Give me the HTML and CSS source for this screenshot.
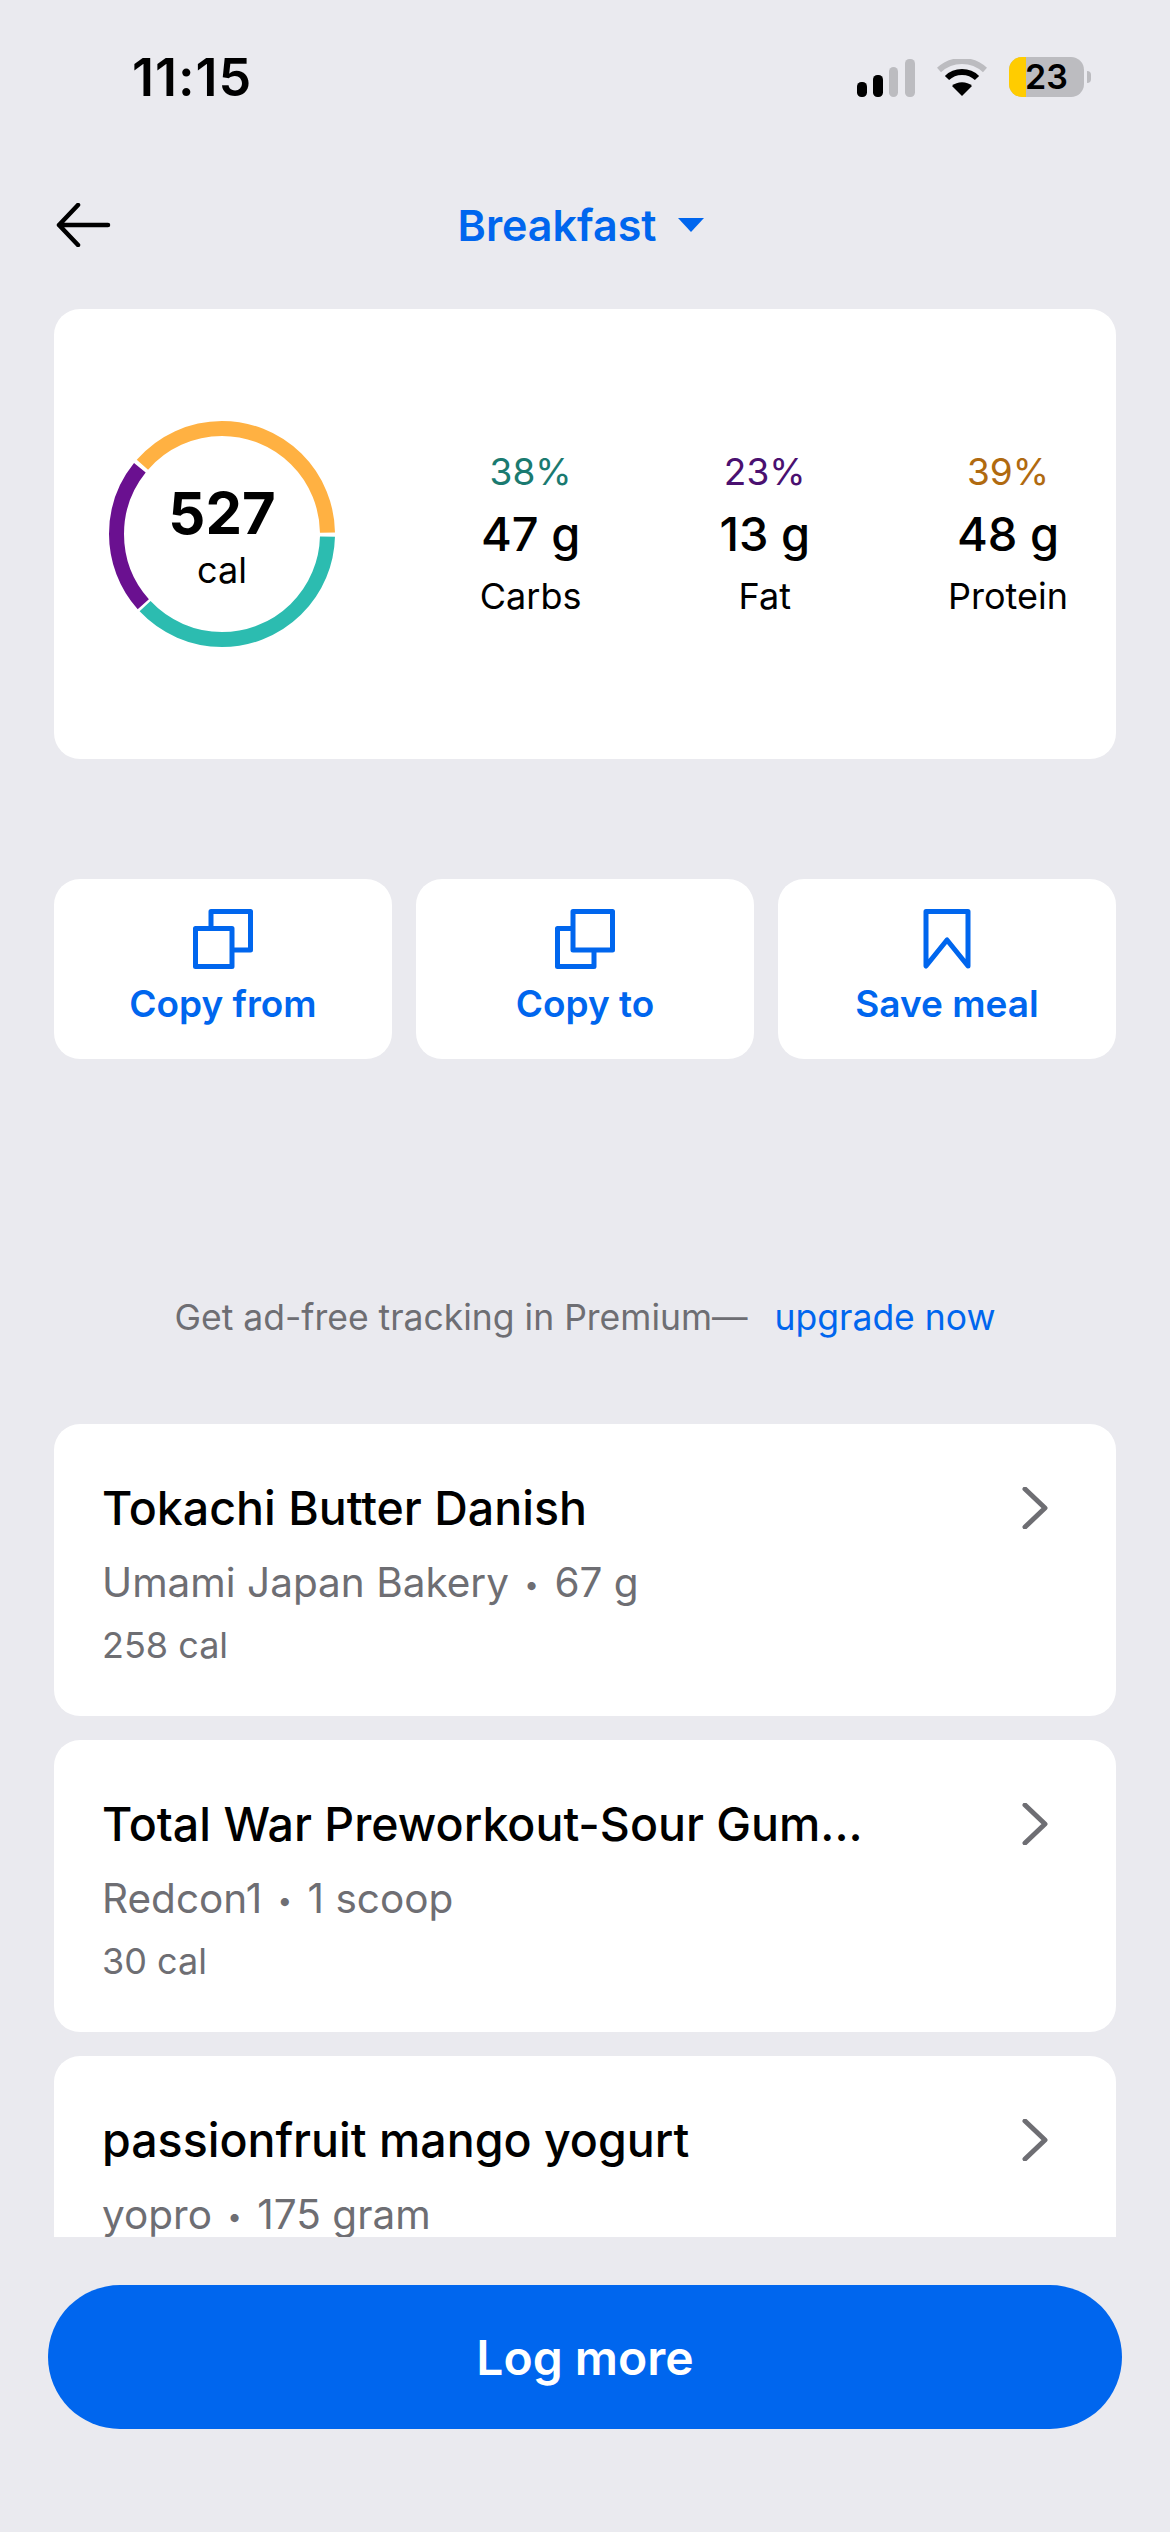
FILE: index.html
```html
<!DOCTYPE html>
<html lang="en">
<head>
    <meta charset="UTF-8">
    <meta name="viewport" content="width=device-width, initial-scale=1.0">
    <title>Breakfast</title>
    <link rel="stylesheet" href="styles.css">
</head>
<body>
    <div class="status-bar">
        <span class="time">11:15</span>
        <div class="status-icons">
            <svg class="signal" width="58" height="38" viewBox="0 0 58 38">
                <rect x="0" y="23" width="10" height="15" rx="4.5" fill="#000"/>
                <rect x="16" y="16" width="10" height="22" rx="4.5" fill="#000"/>
                <rect x="32" y="8" width="9" height="30" rx="4.5" fill="#bcbcc0"/>
                <rect x="48" y="0" width="10" height="38" rx="4.5" fill="#bcbcc0"/>
            </svg>
            <svg class="wifi" width="50" height="38" viewBox="0 0 50 38">
                <path d="M2 11 C15 -1 35 -1 48 11" fill="none" stroke="#bcbcc0" stroke-width="6"/>
                <path d="M10 19 C18 11 32 11 40 19" fill="none" stroke="#000" stroke-width="6"/>
                <path d="M25 37 L15 27 C20 22 30 22 35 27 Z" fill="#000"/>
            </svg>
            <div class="battery">
                <div class="battery-body">
                    <span class="battery-fill"></span>
                    <span class="battery-num">23</span>
                </div>
                <span class="battery-tip"></span>
            </div>
        </div>
    </div>

    <header class="nav">
        <svg class="back" width="58" height="44" viewBox="0 0 58 44">
            <path d="M52 22 H3 M22 2 L3 22 L22 42" fill="none" stroke="#000" stroke-width="4.5" stroke-linecap="round" stroke-linejoin="round"/>
        </svg>
        <div class="nav-title">
            <span>Breakfast</span>
            <span class="caret"></span>
        </div>
    </header>

    <section class="card summary">
        <div class="ring">
            <svg width="226" height="226" viewBox="0 0 226 226">
                <circle class="seg seg-carbs" cx="113" cy="113" r="105.5" pathLength="100"/>
                <circle class="seg seg-fat" cx="113" cy="113" r="105.5" pathLength="100"/>
                <circle class="seg seg-protein" cx="113" cy="113" r="105.5" pathLength="100"/>
            </svg>
            <div class="ring-label">
                <div class="ring-num">527</div>
                <div class="ring-unit">cal</div>
            </div>
        </div>
        <div class="macros">
            <div class="macro">
                <div class="pct pct-carbs">38%</div>
                <div class="grams">47 g</div>
                <div class="macro-name">Carbs</div>
            </div>
            <div class="macro">
                <div class="pct pct-fat">23%</div>
                <div class="grams">13 g</div>
                <div class="macro-name">Fat</div>
            </div>
            <div class="macro">
                <div class="pct pct-protein">39%</div>
                <div class="grams">48 g</div>
                <div class="macro-name">Protein</div>
            </div>
        </div>
    </section>

    <section class="actions">
        <button class="card action">
            <svg width="60" height="60" viewBox="0 0 60 60">
                <path class="ico" d="M18 2.5 H57.5 V41 H18 Z"/>
                <path class="ico ico-front" d="M2.5 19.5 H39 V57.5 H2.5 Z"/>
            </svg>
            <span>Copy from</span>
        </button>
        <button class="card action">
            <svg width="60" height="60" viewBox="0 0 60 60">
                <path class="ico" d="M2.5 19.5 H39 V57.5 H2.5 Z"/>
                <path class="ico ico-front" d="M18 2.5 H57.5 V41 H18 Z"/>
            </svg>
            <span>Copy to</span>
        </button>
        <button class="card action">
            <svg width="48" height="60" viewBox="0 0 48 60">
                <path class="ico" d="M3 2.5 H45 V57 L24 31 L3 57 Z"/>
            </svg>
            <span>Save meal</span>
        </button>
    </section>

    <p class="promo">
        <span>Get ad-free tracking in Premium—</span>
        <a class="promo-link" href="#">upgrade now</a>
    </p>

    <div class="food-list">
        <div class="card food">
            <div>
                <div class="food-name">Tokachi Butter Danish</div>
                <div class="food-meta">Umami Japan Bakery <span class="dot">•</span> 67 g</div>
                <div class="food-cal">258 cal</div>
            </div>
            <svg class="chevron" width="26" height="42" viewBox="0 0 26 42"><path d="M3 2 L23 21 L3 40"/></svg>
        </div>
        <div class="card food">
            <div>
                <div class="food-name">Total War Preworkout-Sour Gum...</div>
                <div class="food-meta">Redcon1 <span class="dot">•</span> 1 scoop</div>
                <div class="food-cal">30 cal</div>
            </div>
            <svg class="chevron" width="26" height="42" viewBox="0 0 26 42"><path d="M3 2 L23 21 L3 40"/></svg>
        </div>
        <div class="card food">
            <div>
                <div class="food-name">passionfruit mango yogurt</div>
                <div class="food-meta">yopro <span class="dot">•</span> 175 gram</div>
            </div>
            <svg class="chevron" width="26" height="42" viewBox="0 0 26 42"><path d="M3 2 L23 21 L3 40"/></svg>
        </div>
    </div>

    <footer class="footer">
        <button class="log-more">Log more</button>
    </footer>
</body>
</html>
```

FILE: styles.css
```css
* {
    box-sizing: border-box;
}
html, body {
    margin: 0;
    height: 2532px;
    overflow: hidden;
}
body {
    font-family: Inter, "Liberation Sans", sans-serif;
    background-color: #eaeaef;
    color: #000;
}
.card {
    background: white;
    border-radius: 26px;
}

/* status bar */
.status-bar {
    height: 154px;
    padding: 53px 79px 0 132px;
    display: flex;
    justify-content: space-between;
}
.time {
    font-size: 52px;
    font-weight: 600;
    line-height: 50px;
    letter-spacing: 1px;
}
.status-icons {
    display: flex;
    align-items: flex-start;
    gap: 22px;
    padding-top: 4px;
}
.signal, .wifi {
    margin-top: 2px;
}
.battery {
    display: flex;
    align-items: center;
    gap: 3px;
}
.battery-body {
    position: relative;
    width: 75px;
    height: 40px;
    border-radius: 13px;
    background: #bcbcc0;
    text-align: center;
}
.battery-fill {
    position: absolute;
    left: 0;
    top: 0;
    bottom: 0;
    width: 17px;
    border-radius: 13px 0 0 13px;
    background: #ffcc00;
}
.battery-num {
    position: relative;
    display: block;
    font-size: 34px;
    font-weight: 600;
    line-height: 40px;
}
.battery-tip {
    width: 4px;
    height: 12px;
    border-radius: 0 5px 5px 0;
    background: #bcbcc0;
}

/* nav */
.nav {
    position: relative;
    height: 155px;
    display: flex;
    align-items: flex-start;
    justify-content: center;
}
.back {
    position: absolute;
    left: 56px;
    top: 49px;
}
.nav-title {
    display: flex;
    align-items: center;
    gap: 22px;
    font-size: 43px;
    font-weight: 600;
    line-height: 72px;
    color: #0066ee;
    margin-top: 35px;
    margin-left: -8px;
}
.caret {
    width: 0;
    height: 0;
    border-left: 13px solid transparent;
    border-right: 13px solid transparent;
    border-top: 14px solid #0066ee;
}

/* summary */
.summary {
    height: 450px;
    margin: 0 54px;
    padding: 0 48px 0 55px;
    display: flex;
    align-items: center;
}
.ring {
    position: relative;
    width: 226px;
    height: 226px;
    flex: none;
}
.seg {
    fill: none;
    stroke-width: 15;
}
.seg-carbs {
    stroke: #2cbcb0;
    stroke-dasharray: 37.6 62.4;
    stroke-dashoffset: -0.4;
}
.seg-fat {
    stroke: #6a1090;
    stroke-dasharray: 22.4 77.6;
    stroke-dashoffset: -38.4;
}
.seg-protein {
    stroke: #ffb142;
    stroke-dasharray: 38.4 61.6;
    stroke-dashoffset: -61.4;
}
.ring-label {
    position: absolute;
    inset: 0;
    text-align: center;
}
.ring-num {
    font-size: 58px;
    font-weight: 700;
    line-height: 60px;
    margin-top: 62px;
}
.ring-unit {
    font-size: 36px;
    line-height: 40px;
    margin-top: 7px;
}
.macros {
    flex: 1;
    display: flex;
    justify-content: flex-end;
    gap: 138px;
}
.macro {
    text-align: center;
}
.pct {
    font-size: 37px;
    line-height: 40px;
}
.pct-carbs { color: #1a7a70; }
.pct-fat { color: #4a1070; }
.pct-protein { color: #b06a10; }
.grams {
    font-size: 47px;
    font-weight: 500;
    line-height: 56px;
    margin-top: 14px;
    white-space: nowrap;
}
.macro-name {
    font-size: 36px;
    line-height: 40px;
    margin-top: 14px;
    white-space: nowrap;
}

/* actions */
.actions {
    display: flex;
    gap: 24px;
    margin: 120px 54px 0;
}
.action {
    flex: 1;
    height: 180px;
    border: none;
    padding: 30px 0 0;
    display: flex;
    flex-direction: column;
    align-items: center;
    gap: 12px;
    font-family: inherit;
    font-size: 37px;
    font-weight: 600;
    color: #0066ee;
}
.ico {
    fill: none;
    stroke: #0066ee;
    stroke-width: 5;
    stroke-linejoin: round;
}
.ico-front {
    fill: white;
}

/* promo */
.promo {
    margin: 0;
    padding-top: 239px;
    display: flex;
    justify-content: center;
    gap: 27px;
    font-size: 35.5px;
    line-height: 40px;
    color: #6e6e73;
}
.promo-link {
    color: #0066ee;
    text-decoration: none;
}

/* food list, the third row runs under the footer */
.food-list {
    height: 813px;
    margin: 86px 54px 0;
    overflow: hidden;
    display: flex;
    flex-direction: column;
    gap: 24px;
}
.food {
    flex: none;
    height: 292px;
    padding: 56px 68px 0 48px;
    display: flex;
    justify-content: space-between;
    align-items: flex-start;
}
.food-name {
    font-size: 46.5px;
    font-weight: 500;
    line-height: 56px;
}
.food-meta {
    font-size: 40.5px;
    line-height: 48px;
    color: #6e6e73;
    margin-top: 23px;
}
.dot {
    font-size: 26px;
    vertical-align: 3px;
    margin: 0 4px;
}
.food-cal {
    font-size: 36px;
    line-height: 40px;
    color: #6e6e73;
    margin-top: 16px;
}
.chevron {
    fill: none;
    stroke: #6e6e73;
    stroke-width: 5;
    stroke-linecap: round;
    stroke-linejoin: round;
    margin-top: 7px;
}

/* footer */
.footer {
    padding: 48px 48px 0;
}
.log-more {
    display: block;
    width: 100%;
    height: 144px;
    border: none;
    border-radius: 72px;
    background-color: #0066ee;
    color: white;
    font-family: inherit;
    font-size: 48px;
    font-weight: 600;
}
```
